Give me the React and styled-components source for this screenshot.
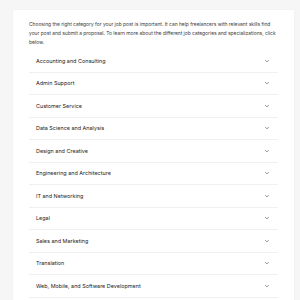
import React from "react";
import styled, { createGlobalStyle } from "styled-components";

const Global = createGlobalStyle`
  html, body { margin: 0; padding: 0; background: #f6f6f7; }
  body { font-family: Inter, "Liberation Sans", Arial, sans-serif; }
`;

const Page = styled.div`
  padding: 10px 6px 0 13px;
  min-height: 300px;
  box-sizing: border-box;
`;

const Card = styled.div`
  background: #ffffff;
  box-shadow: 0 0 1px rgba(0, 0, 0, 0.08);
  padding: 10px 16px 0 16px;
  min-height: 290px;
  box-sizing: border-box;
`;

const Intro = styled.p`
  margin: 0 0 3px 0;
  font-size: 4.95px;
  line-height: 9px;
  color: #3a3a3a;
  letter-spacing: -0.02px;
`;

const List = styled.div`
  display: flex;
  flex-direction: column;
`;

const Row = styled.div`
  display: flex;
  align-items: center;
  justify-content: space-between;
  height: 22.5px;
  padding: 0 8px 0 7px;
  border-bottom: 1px solid #f0f0f0;
  box-sizing: border-box;
`;

const Label = styled.span`
  font-size: 5.45px;
  color: #222;
`;

const Chevron = () => (
  <svg width="6" height="6" viewBox="0 0 6 6">
    <polyline points="1.2,2.2 3,3.8 4.8,2.2" fill="none" stroke="#666" strokeWidth="0.7" />
  </svg>
);

const items = [
  "Accounting and Consulting",
  "Admin Support",
  "Customer Service",
  "Data Science and Analysis",
  "Design and Creative",
  "Engineering and Architecture",
  "IT and Networking",
  "Legal",
  "Sales and Marketing",
  "Translation",
  "Web, Mobile, and Software Development",
];

export default function App() {
  return (
    <>
      <Global />
      <Page>
        <Card>
          <Intro>
            Choosing the right category for your job post is important. It can help freelancers with relevant skills find your post and submit a proposal. To learn more about the different job categories and specializations, click below.
          </Intro>
          <List>
            {items.map((it) => (
              <Row key={it}>
                <Label>{it}</Label>
                <Chevron />
              </Row>
            ))}
          </List>
        </Card>
      </Page>
    </>
  );
}
